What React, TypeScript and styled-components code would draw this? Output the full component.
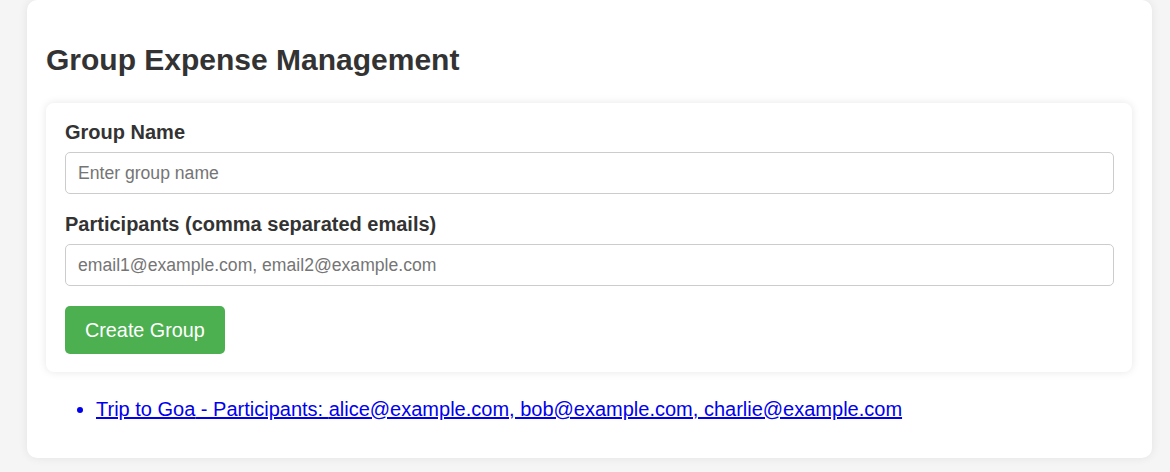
import React from "react";
import styled, { createGlobalStyle } from "styled-components";

const GlobalStyle = createGlobalStyle`
  html, body {
    margin: 0;
    padding: 0;
    background: #f5f5f5;
    font-family: "Liberation Sans", Arial, sans-serif;
    color: #333;
  }
`;

const Page = styled.div`
  padding: 0 18px 14px 27px;
`;

const Container = styled.div`
  background: #fff;
  border-radius: 10px;
  box-shadow: 0 0 10px rgba(0, 0, 0, 0.08);
  padding: 20px 20px 1px 19px;
`;

const Title = styled.h1`
  font-size: 30px;
  font-weight: bold;
  color: #333;
  margin: 23px 0 26px;
  line-height: normal;
`;

const FormCard = styled.div`
  background: #fff;
  border-radius: 8px;
  box-shadow: 0 0 8px rgba(0, 0, 0, 0.1);
  padding: 18px 18px 18px 19px;
  display: flex;
  flex-direction: column;
  align-items: flex-start;
`;

const Label = styled.label`
  font-size: 20px;
  font-weight: bold;
  color: #333;
  margin-bottom: 8px;
  line-height: 23px;
`;

const Input = styled.input`
  box-sizing: border-box;
  width: 100%;
  height: 42px;
  padding: 0 12px;
  font-size: 17.6px;
  font-family: "Liberation Sans", Arial, sans-serif;
  border: 1px solid #ccc;
  border-radius: 5px;
  margin-bottom: 19px;
  color: #333;
  &::placeholder {
    color: #757575;
  }
`;

const Button = styled.button`
  background: #4caf50;
  color: #fff;
  border: none;
  border-radius: 5px;
  font-size: 19.8px;
  font-family: "Liberation Sans", Arial, sans-serif;
  padding: 0 20px;
  height: 48px;
  margin-top: 1px;
  cursor: pointer;
`;

const GroupList = styled.ul`
  margin: 26px 0 36px;
  padding-left: 50px;
  font-size: 20px;
  line-height: normal;
  color: #0000ee;
`;

const GroupLink = styled.a`
  color: #0000ee;
  text-decoration: underline;
`;

export default function App() {
  const groups = [
    {
      name: "Trip to Goa",
      participants: ["alice@example.com", "bob@example.com", "charlie@example.com"],
    },
  ];
  return (
    <>
      <GlobalStyle />
      <Page>
        <Container>
          <Title>Group Expense Management</Title>
          <FormCard>
            <Label>Group Name</Label>
            <Input placeholder="Enter group name" />
            <Label>Participants (comma separated emails)</Label>
            <Input placeholder="email1@example.com, email2@example.com" />
            <Button>Create Group</Button>
          </FormCard>
          <GroupList>
            {groups.map((g) => (
              <li key={g.name}>
                <GroupLink href="#">
                  {g.name} - Participants: {g.participants.join(", ")}
                </GroupLink>
              </li>
            ))}
          </GroupList>
        </Container>
      </Page>
    </>
  );
}
